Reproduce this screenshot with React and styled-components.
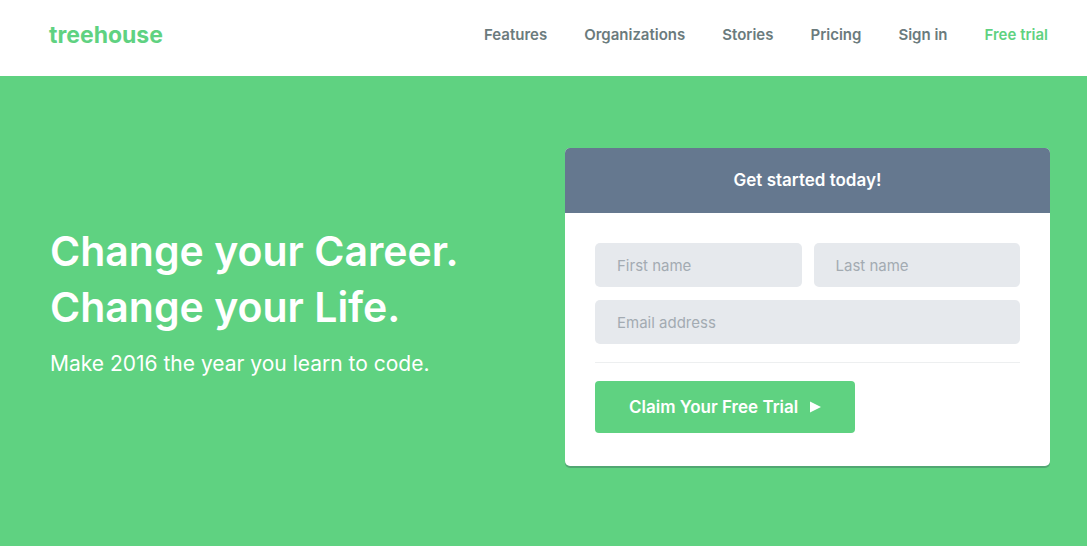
import React from "react";
import styled, { createGlobalStyle } from "styled-components";

const green = "#5fd281";
const slate = "#65788f";

const GlobalStyle = createGlobalStyle`
  *, *::before, *::after { box-sizing: border-box; }
  body {
    margin: 0;
    background: #fff;
    font-family: Inter, "Open Sans", sans-serif;
    -webkit-font-smoothing: antialiased;
  }
`;

const Header = styled.header`
  display: flex;
  align-items: center;
  justify-content: space-between;
  flex-wrap: wrap;
  padding: 20px 39px 26px 49px;
`;

const Logo = styled.a`
  color: ${green};
  font-size: 23px;
  font-weight: 700;
  line-height: 30px;
  text-decoration: none;
`;

const Nav = styled.nav`
  display: flex;
  flex-wrap: wrap;
  gap: 37px;
`;

const NavLink = styled.a`
  color: ${(p) => (p.$accent ? green : "#6b7b7d")};
  font-size: 15px;
  font-weight: 600;
  line-height: 30px;
  text-decoration: none;
`;

const Hero = styled.main`
  display: grid;
  grid-template-columns: 1fr 1fr;
  gap: 30px;
  align-items: center;
  padding: 72px 37px 80px 50px;
  background: ${green};
  color: #fff;

  @media (max-width: 800px) {
    grid-template-columns: 1fr;
  }
`;

const Pitch = styled.section`
  padding-bottom: 12px;
`;

const Title = styled.h1`
  margin: 0 0 14px;
  font-size: 41px;
  font-weight: 600;
  line-height: 56px;
`;

const Line = styled.span`
  display: block;
`;

const Tagline = styled.p`
  margin: 0;
  font-size: 21px;
  line-height: 30px;
`;

const Card = styled.section`
  overflow: hidden;
  border-radius: 5px;
  background: #fff;
  box-shadow: 0 2px 0 rgba(50, 70, 80, 0.3);
`;

const CardTitle = styled.h2`
  margin: 0;
  padding: 20px;
  background: ${slate};
  font-size: 17px;
  font-weight: 600;
  line-height: 25px;
  text-align: center;
`;

const Form = styled.form`
  display: grid;
  grid-template-columns: 1fr 1fr;
  gap: 13px 12px;
  padding: 30px 30px 33px;
`;

const Input = styled.input`
  grid-column: ${(p) => (p.$wide ? "1 / -1" : "auto")};
  width: 100%;
  height: 44px;
  padding: 0 22px;
  border: 0;
  border-radius: 5px;
  background: #e6e9ed;
  color: ${slate};
  font-family: inherit;
  font-size: 15px;

  &::placeholder {
    color: #a3abb2;
    opacity: 1;
  }
`;

const Actions = styled.div`
  grid-column: 1 / -1;
  margin-top: 5px;
  padding-top: 18px;
  border-top: 1px solid #edeff0;
`;

const Submit = styled.button`
  display: inline-flex;
  align-items: center;
  gap: 12px;
  height: 52px;
  padding: 0 34px;
  border: 0;
  border-radius: 4px;
  background: ${green};
  color: #fff;
  font-family: inherit;
  font-size: 17px;
  font-weight: 600;
  cursor: pointer;
  vertical-align: top;
`;

const links = ["Features", "Organizations", "Stories", "Pricing", "Sign in"];

export default function App() {
  return (
    <>
      <GlobalStyle />
      <Header>
        <Logo href="#">treehouse</Logo>
        <Nav aria-label="Main">
          {links.map((label) => (
            <NavLink key={label} href="#">{label}</NavLink>
          ))}
          <NavLink href="#" $accent>Free trial</NavLink>
        </Nav>
      </Header>
      <Hero>
        <Pitch>
          <Title>
            <Line>Change your Career.</Line>
            <Line>Change your Life.</Line>
          </Title>
          <Tagline>Make 2016 the year you learn to code.</Tagline>
        </Pitch>
        <Card>
          <CardTitle>Get started today!</CardTitle>
          <Form>
            <Input type="text" placeholder="First name" aria-label="First name" />
            <Input type="text" placeholder="Last name" aria-label="Last name" />
            <Input $wide type="email" placeholder="Email address" aria-label="Email address" />
            <Actions>
              <Submit type="button">
                Claim Your Free Trial
                <svg width="11" height="12" viewBox="0 0 11 12" aria-hidden="true">
                  <path d="M0 0.5 11 6 0 11.5Z" fill="currentColor" />
                </svg>
              </Submit>
            </Actions>
          </Form>
        </Card>
      </Hero>
    </>
  );
}
